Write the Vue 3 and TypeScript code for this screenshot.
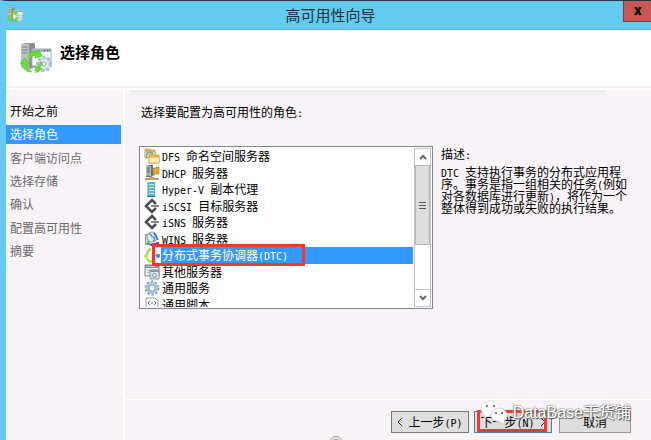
<script setup lang="ts">
import { computed, ref } from 'vue'

interface Run { text: string; latin: boolean }
interface Role { icon: string; name: string }

const steps: string[] = ['开始之前', '选择角色', '客户端访问点', '选择存储', '确认', '配置高可用性', '摘要']
const currentStep = 1

const roles: Role[] = [
  { icon: 'dfs', name: 'DFS 命名空间服务器' },
  { icon: 'dhcp', name: 'DHCP 服务器' },
  { icon: 'hyperv', name: 'Hyper-V 副本代理' },
  { icon: 'iscsi', name: 'iSCSI 目标服务器' },
  { icon: 'iscsi', name: 'iSNS 服务器' },
  { icon: 'wins', name: 'WINS 服务器' },
  { icon: 'dtc', name: '分布式事务协调器(DTC)' },
  { icon: 'other', name: '其他服务器' },
  { icon: 'service', name: '通用服务' },
  { icon: 'script', name: '通用脚本' },
]
const selected = ref(6)

const description = 'DTC 支持执行事务的分布式应用程序。事务是指一组相关的任务(例如对各数据库进行更新)，将作为一个整体得到成功或失败的执行结果。'

// Splits a string into half-width and full-width runs, each set in its own face.
function runs(text: string): Run[] {
  return (text.match(/[\x20-\x7e]+|[^\x20-\x7e]+/g) ?? []).map((t) => ({
    text: t,
    latin: /^[\x20-\x7e]/.test(t),
  }))
}

const roleRows = computed(() => roles.map((r) => ({ ...r, runs: runs(r.name) })))
const descriptionRuns = runs(description)
</script>

<template>
  <div class="window">
    <svg class="defs" aria-hidden="true">
      <symbol id="cluster" viewBox="0 0 32 32">
        <path d="M1 2l5-1h9v24l-5 2-9-1z" fill="#8e9699" />
        <path d="M1 2h8v24H1z" fill="#bcc1c3" />
        <path d="M2 5h6M2 8h6M2 11h6" stroke="#7c868a" stroke-width="1" />
        <path d="M10 2h5v23h-5z" fill="#858d90" />
        <path d="M12 7h19v17H12z" fill="#f7fafb" stroke="#a3afb6" />
        <path d="M12 7h19v3H12z" fill="#a4b5c1" />
        <path d="M24 8.500h1M27 8.500h1M29 8.500h1" stroke="#41586b" />
        <circle cx="24" cy="22" r="6.500" fill="#dce8f2" stroke="#a9bfd2" stroke-width="3" stroke-dasharray="3 1.700" />
        <circle cx="24" cy="22" r="5.500" fill="#dce8f2" stroke="#b2c5d6" />
        <circle cx="24" cy="22" r="2" fill="#fff" stroke="#8fa9c0" />
        <path d="M8 14c3-5 7-6 10-4l1-2 3 6-7 2 1-2c-3-1-5 0-7 3z" fill="#6be02f" stroke="#4fc42a" stroke-width=".7" />
        <path d="M0 22l5-6 5 6H7c0 4 2 6 5 8-6 0-9-3-9-8z" fill="#6be02f" stroke="#4fc42a" stroke-width=".7" />
        <path d="M22 20c0 3-1 4-3 6l3 1-6 4-1-7 2 1c2-2 3-3 3-5z" fill="#6be02f" stroke="#4fc42a" stroke-width=".7" />
      </symbol>
    </svg>

    <header class="titlebar">
      <svg class="app-icon" aria-hidden="true"><use href="#cluster" /></svg>
      <span class="window-title">高可用性向导</span>
      <button class="close" type="button" aria-label="关闭">
        <svg viewBox="0 0 10 8" aria-hidden="true"><path d="M1 0h3l1 2 1-2h3L6.500 4 9 8H6L5 6 4 8H1l2.500-4z" fill="#160e0e" /></svg>
      </button>
    </header>

    <div class="banner">
      <svg class="banner-icon" aria-hidden="true"><use href="#cluster" /></svg>
      <h1>选择角色</h1>
    </div>

    <div class="body">
      <nav class="sidebar">
        <ol>
          <li v-for="(step, i) in steps" :key="step" :class="{ visited: i < currentStep, current: i === currentStep }">{{ step }}</li>
        </ol>
      </nav>

      <div class="pane">
        <main class="content">
          <div class="strip"></div>
          <p id="prompt" class="prompt">选择要配置为高可用性的角色<span class="latin">:</span></p>

          <div class="columns">
            <div class="listbox">
              <ul class="roles" aria-labelledby="prompt">
                <li v-for="(role, i) in roleRows" :key="role.name">
                  <button type="button" class="role" :class="{ selected: i === selected }" :aria-pressed="i === selected" @click="selected = i">
                    <svg viewBox="0 0 16 16" aria-hidden="true">
                      <g v-if="role.icon === 'dfs'" stroke="#c99b45" stroke-width=".7">
                        <path d="M1 3V1h5l1 1h4v7H1z" fill="#e9b955" />
                        <path d="M1 4h11l-1 6H1z" fill="#ffe49a" />
                        <path d="M5 8V6h4l1 1h5v8H5z" fill="#e9b955" />
                        <path d="M5 9h11l-1 6H5z" fill="#ffe9a8" />
                        <path d="M3 10c-2-5 3-8 6-4" fill="none" stroke="#64a8c6" stroke-width="1.500" />
                      </g>
                      <g v-else-if="role.icon === 'dhcp'">
                        <path d="M2 1l3-1h4v11l-3 1H2z" fill="#65727b" />
                        <path d="M2 1h5v10H2z" fill="#aeb8bd" />
                        <path d="M3 3h3M3 5h3M3 7h3" stroke="#4e5d66" />
                        <path d="M3 9h2v2H3z" fill="#58c83e" />
                        <path d="M9 3h2v7H9zM12 2h3v7h-3z" fill="#e4ae24" stroke="#a47911" stroke-width=".6" />
                        <path d="M1 14h14M7 11v3" stroke="#7b8389" stroke-width="1.500" />
                        <path d="M5 12h5v3H5z" fill="#d6a62e" />
                      </g>
                      <g v-else-if="role.icon === 'hyperv'">
                        <path d="M3 1h8v14H3z" fill="#55b5c6" />
                        <path d="M3 1h1v14H3z" fill="#8cd7df" />
                        <path d="M5 3.500h5M5 6.500h5M5 9.500h5M5 12.500h5" stroke="#d7f2f4" />
                        <path d="M3 15.500h8" stroke="#287c93" />
                      </g>
                      <g v-else-if="role.icon === 'iscsi'" fill="none">
                        <path d="M12 6L8 2 2 8l6 6 4-4" stroke="#4b4b4b" stroke-width="2.500" />
                        <path d="M7 8h8" stroke="#8c8c8c" stroke-width="2" />
                      </g>
                      <g v-else-if="role.icon === 'wins'">
                        <path d="M1 3h5v11H1z" fill="#969c9e" />
                        <path d="M2 4h2v8H2z" fill="#cdd2d3" />
                        <path d="M5 13l10-2v4H7z" fill="#365b9c" />
                        <circle cx="8" cy="6" r="5" fill="#dceffb" stroke="#6aa4cf" />
                        <path d="M5 3c3 0 2 3 4 3s2 3 0 4" fill="none" stroke="#4f94cb" stroke-width="1.500" />
                        <path d="M10 2l4 7" stroke="#2d65b4" stroke-width="1.500" />
                        <path d="M4 10v4" stroke="#50b83f" />
                      </g>
                      <g v-else-if="role.icon === 'dtc'" fill="none">
                        <path d="M7 2C4 3 3 5 3 8M3 11c1 3 3 4 5 3" stroke="#9ed718" stroke-width="2" />
                        <path d="M10 8h6" stroke="#7fc71c" stroke-width="1.500" />
                        <circle cx="2" cy="9" r="2" fill="#bde54f" />
                        <circle cx="14" cy="9" r="2" fill="#2997dc" />
                      </g>
                      <g v-else-if="role.icon === 'other'">
                        <path d="M1 1h14v11H1z" fill="#e9edf0" stroke="#77868f" />
                        <path d="M1 1h14v3H1z" fill="#7d8e9a" />
                        <path d="M2 2.500h9M3 6.500h3M3 8.500h3" stroke="#b9c6cf" />
                        <path d="M6 6h9v9H6z" fill="#d5e4ed" stroke="#8095a5" />
                        <path d="M6 6h9v2H6z" fill="#8298a8" />
                        <circle cx="10.500" cy="11.500" r="2" fill="#eef5f9" stroke="#7899b2" />
                      </g>
                      <g v-else-if="role.icon === 'service'" fill="none">
                        <circle cx="8" cy="8" r="6" stroke="#7da2c1" stroke-width="3" stroke-dasharray="2.200 1.570" />
                        <circle cx="8" cy="8" r="4.500" fill="#fff" stroke="#a8c6dc" stroke-width="3" />
                        <circle cx="8" cy="8" r="3" stroke="#6f94b3" stroke-width=".7" />
                      </g>
                      <g v-else fill="none" stroke="#969da1">
                        <path d="M2 1h9l3 3v11H2z" fill="#f4f6f7" />
                        <path d="M6 4L4 6l2 2M10 4l2 2-2 2M7 6h2M4 11h8" stroke="#687b8d" />
                      </g>
                    </svg>
                    <span class="role-name"><span v-for="(run, n) in role.runs" :key="n" :class="{ latin: run.latin }">{{ run.text }}</span></span>
                    <span v-if="role.icon === 'dtc'" class="mark mark-role"></span>
                  </button>
                </li>
              </ul>
              <div class="scrollbar">
                <button type="button" aria-label="向上滚动"><svg viewBox="0 0 8 6" aria-hidden="true"><path d="M1 5l3-3 3 3" /></svg></button>
                <div class="thumb"><i></i><i></i><i></i></div>
                <div class="track"></div>
                <button type="button" aria-label="向下滚动"><svg viewBox="0 0 8 6" aria-hidden="true"><path d="M1 1l3 3 3-3" /></svg></button>
              </div>
            </div>

            <section class="details">
              <h2>描述<span class="latin">:</span></h2>
              <p><span v-for="(run, n) in descriptionRuns" :key="n" :class="{ latin: run.latin }">{{ run.text }}</span></p>
            </section>
          </div>
        </main>

        <footer class="actions">
          <button type="button" class="action">
            <svg viewBox="0 0 6 10" aria-hidden="true"><path d="M5 1L1 5l4 4" /></svg>
            <span>上一步<span class="latin">(P)</span></span>
          </button>
          <button type="button" class="action next">
            <span>下一步<span class="latin">(N)</span></span>
            <svg viewBox="0 0 6 10" aria-hidden="true"><path d="M1 1l4 4-4 4" /></svg>
            <span class="mark mark-next"></span>
          </button>
          <button type="button" class="action cancel">取消</button>
          <div class="watermark">
            <svg viewBox="0 0 28 26" aria-hidden="true">
              <path d="M11 1C5 1 1 5 1 9c0 3 1 5 4 6l-1 4 4-3c8 1 13-2 13-7 0-4-4-8-10-8z" fill="#fff" stroke="#d5d1d5" stroke-width=".7" />
              <path d="M19 8c-5 0-8 3-8 7s4 7 9 7l5 3-1-4c2-1 3-3 3-6 0-4-4-7-8-7z" fill="#fff" stroke="#bab6ba" stroke-width=".7" />
              <g fill="#4e494c"><circle cx="7" cy="6" r="1" /><circle cx="14" cy="6" r="1" /><circle cx="16" cy="13" r="1" /><circle cx="22" cy="13" r="1" /></g>
            </svg>
            <span>DataBase干货铺</span>
          </div>
          <svg class="seal" viewBox="0 0 12 4" aria-hidden="true"><circle cx="6" cy="6" r="5.500" /><circle cx="6" cy="6" r="3" /></svg>
        </footer>
      </div>
    </div>
  </div>
</template>

<style>
body {
  margin: 0;
}
</style>

<style scoped>
.window {
  box-sizing: border-box;
  display: flex;
  flex-direction: column;
  min-height: 100vh;
  border-top: 1px solid #29333d;
  border-left: 6px solid #64caef;
  background: #f7f3f7;
  color: #000;
  font-family: "Noto Sans CJK SC", "Liberation Sans", sans-serif;
  font-size: 12px;
  line-height: 16px;
}

.window * {
  box-sizing: border-box;
}

h1, h2, p, ul, ol {
  margin: 0;
  padding: 0;
  list-style: none;
}

button {
  padding: 0;
  border: 0;
  background: none;
  color: inherit;
  font: inherit;
}

.latin {
  font-family: "DejaVu Sans Mono", monospace;
  font-size: 10px;
  line-height: 0;
  white-space: pre-wrap;
}

.defs {
  position: absolute;
  width: 0;
  height: 0;
}

.titlebar {
  display: grid;
  grid-template-columns: 32px 1fr 28px;
  height: 29px;
  border-bottom: 1px solid #5faccb;
  background: #64caef;
}

.app-icon {
  width: 16px;
  height: 16px;
  margin: 6px 0 0 1px;
}

.window-title {
  color: #16323d;
  font-size: 15px;
  line-height: 28px;
  text-align: center;
}

.close {
  display: grid;
  place-items: center;
  height: 21px;
  border: 1px solid #813b3c;
  border-top: 0;
  border-right: 0;
  background: #c75853;
}

.close svg {
  width: 10px;
  height: 8px;
}

.banner {
  display: flex;
  gap: 8px;
  height: 60px;
  padding: 12px 14px;
  border-bottom: 2px solid #fff;
  background: linear-gradient(#fff 56px, #f5f1f5 56px);
}

.banner-icon {
  width: 32px;
  height: 32px;
}

h1 {
  font-size: 15px;
  line-height: 20px;
}

.body {
  display: flex;
  flex: 1;
}

.sidebar {
  width: 119px;
  padding: 12px 2px 0 0;
  border-right: 2px solid #fff;
}

.sidebar ol {
  display: flex;
  flex-direction: column;
  justify-content: space-between;
  min-height: 159px;
}

.sidebar li {
  padding: 0 0 2px 4px;
  color: #6b696b;
  line-height: 17px;
}

.sidebar .visited {
  color: #000;
}

.sidebar .current {
  background: #3399ff;
  color: #fff;
}

.pane {
  display: flex;
  flex: 1;
  flex-direction: column;
  min-width: 0;
}

.content {
  flex: 1;
  padding: 0 14px;
}

.strip {
  height: 5px;
  margin: 0 32px 0 -8px;
  background: #ededed;
}

.prompt {
  margin: 9px 2px 26px;
}

.columns {
  display: grid;
  grid-template-columns: 3fr 2fr;
  gap: 8px;
}

.listbox {
  display: flex;
  height: 163px;
  padding: 1px;
  border: 1px solid #828790;
  background: #fff;
}

.roles {
  display: flex;
  flex: 1;
  flex-direction: column;
  overflow: hidden;
}

.roles li {
  flex: 0 0 auto;
  height: calc(165px / 10);
}

.role {
  position: relative;
  display: flex;
  gap: 1px;
  width: 100%;
  height: 100%;
  padding-left: 3px;
  text-align: left;
}

.role > svg {
  flex: none;
  width: 16px;
  height: 16px;
}

.role-name {
  flex: 1;
  padding-left: 1px;
  white-space: nowrap;
}

.selected .role-name {
  background: #3399ff;
  color: #fff;
}

.mark {
  position: absolute;
  border: 3px solid #fa3333;
  pointer-events: none;
}

.mark-role {
  z-index: 1;
  top: -3px;
  left: 11px;
  width: 153px;
  height: 22px;
}

.scrollbar {
  display: flex;
  flex-direction: column;
  width: 17px;
  margin-left: 1px;
  border: 1px solid #c4c4c4;
}

.scrollbar button {
  display: grid;
  place-items: center;
  height: 16px;
}

.scrollbar svg {
  width: 8px;
  height: 6px;
  fill: none;
  stroke: #666;
  stroke-width: 2;
}

.thumb {
  display: flex;
  flex: 81;
  flex-direction: column;
  align-items: center;
  justify-content: center;
  gap: 2px;
  border: 1px solid #b5b5b5;
  background: #dedede;
}

.thumb i {
  width: 7px;
  height: 1px;
  background: #555;
}

.track {
  flex: 45;
  border-bottom: 1px solid #c4c4c4;
}

.details {
  padding-right: 6px;
}

h2 {
  font-size: 12px;
  font-weight: 400;
}

.details p {
  margin-top: 4px;
  line-height: 12px;
}

.actions {
  position: relative;
  display: flex;
  justify-content: flex-end;
  gap: 5px;
  height: 41px;
  padding: 11px 20px 0 0;
  border-top: 1px solid #fff;
}

.action {
  position: relative;
  display: flex;
  align-items: center;
  justify-content: center;
  gap: 5px;
  width: 78px;
  height: 22px;
  border: 1px solid #777;
  background: #dedede;
  white-space: nowrap;
}

.action > svg {
  width: 6px;
  height: 10px;
  fill: none;
  stroke: #222;
}

.next {
  border-color: #3b82b8;
}

.cancel {
  width: 72px;
  margin-left: 2px;
  border-color: #999;
}

.mark-next {
  top: -2px;
  left: 2px;
  width: 70px;
  height: 22px;
}

.watermark {
  position: absolute;
  top: 0;
  right: 20px;
  display: flex;
  align-items: center;
  gap: 5px;
  color: #fff;
  font-family: "Liberation Sans", "Noto Sans CJK SC", sans-serif;
  font-size: 16px;
  line-height: 26px;
  text-shadow: 1px 1px 1px #555, -1px 0 1px #999, 0 -1px 1px #bbb;
  pointer-events: none;
}

.watermark svg {
  width: 28px;
  height: 26px;
}

.seal {
  position: absolute;
  bottom: 0;
  left: 205px;
  width: 12px;
  height: 4px;
  fill: none;
  stroke: #999;
}
</style>
